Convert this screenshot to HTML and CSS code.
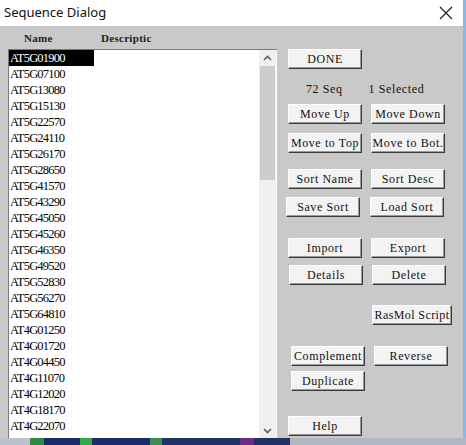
FILE: index.html
```html
<!DOCTYPE html>
<html>
<head>
<meta charset="utf-8">
<link rel="stylesheet" href="styles.css">
</head>
<body>
<div class="window">
  <div class="titlebar">
    <span class="title">Sequence Dialog</span>
    <svg class="close" width="14" height="14" viewBox="0 0 14 14"><path d="M1 1 L13 13 M13 1 L1 13" stroke="#222" stroke-width="1.2" fill="none"/></svg>
  </div>
  <div class="client">
    <div class="left">
      <div class="header">
        <span class="col-name">Name</span>
        <span class="col-desc">Descriptic</span>
      </div>
      <div class="listbox">
        <div class="items">
          <div class="item selected">AT5G01900</div>
          <div class="item">AT5G07100</div>
          <div class="item">AT5G13080</div>
          <div class="item">AT5G15130</div>
          <div class="item">AT5G22570</div>
          <div class="item">AT5G24110</div>
          <div class="item">AT5G26170</div>
          <div class="item">AT5G28650</div>
          <div class="item">AT5G41570</div>
          <div class="item">AT5G43290</div>
          <div class="item">AT5G45050</div>
          <div class="item">AT5G45260</div>
          <div class="item">AT5G46350</div>
          <div class="item">AT5G49520</div>
          <div class="item">AT5G52830</div>
          <div class="item">AT5G56270</div>
          <div class="item">AT5G64810</div>
          <div class="item">AT4G01250</div>
          <div class="item">AT4G01720</div>
          <div class="item">AT4G04450</div>
          <div class="item">AT4G11070</div>
          <div class="item">AT4G12020</div>
          <div class="item">AT4G18170</div>
          <div class="item">AT4G22070</div>
        </div>
        <div class="scrollbar">
          <svg class="arrow" width="17" height="14" viewBox="0 0 17 14"><polyline points="5,9 8.5,5.5 12,9" stroke="#606060" stroke-width="1.6" fill="none"/></svg>
          <div class="track"><div class="thumb"></div></div>
          <svg class="arrow" width="17" height="14" viewBox="0 0 17 14"><polyline points="5,5 8.5,8.5 12,5" stroke="#606060" stroke-width="1.6" fill="none"/></svg>
        </div>
      </div>
    </div>
    <div class="right">
      <div class="row r-done"><button class="btn">DONE</button></div>
      <div class="row r-count"><span class="count">72 Seq</span><span class="count sel">1 Selected</span></div>
      <div class="row r-move"><button class="btn">Move Up</button><button class="btn">Move Down</button></div>
      <div class="row r-moveto"><button class="btn">Move to Top</button><button class="btn">Move to Bot.</button></div>
      <div class="row r-sort"><button class="btn">Sort Name</button><button class="btn">Sort Desc</button></div>
      <div class="row r-save"><button class="btn">Save Sort</button><button class="btn">Load Sort</button></div>
      <div class="row r-import"><button class="btn">Import</button><button class="btn">Export</button></div>
      <div class="row r-details"><button class="btn">Details</button><button class="btn">Delete</button></div>
      <div class="row r-rasmol"><button class="btn wide">RasMol Script</button></div>
      <div class="row r-comp"><button class="btn">Complement</button><button class="btn">Reverse</button></div>
      <div class="row r-dup"><button class="btn">Duplicate</button></div>
      <div class="row r-help"><button class="btn">Help</button></div>
    </div>
  </div>
  <div class="strip"></div>
</div>
</body>
</html>
```

FILE: styles.css
```css
* { box-sizing: border-box; }
html, body { margin: 0; padding: 0; }
body {
  width: 466px;
  height: 445px;
  overflow: hidden;
  background: #8fb6e2;
}
.window {
  width: 463px;
  height: 445px;
  display: flex;
  flex-direction: column;
}
.titlebar {
  height: 26px;
  background: #ffffff;
  display: flex;
  align-items: center;
  justify-content: space-between;
  padding: 0 10px 0 4px;
}
.title {
  font-family: "Noto Sans", "Liberation Sans", sans-serif;
  font-size: 13px;
  color: #111;
  margin-top: -2px;
}
.close { margin-top: -1px; }
.client {
  height: 412px;
  background: #c9c9c9;
  display: flex;
  padding-left: 8px;
}
.left {
  width: 269px;
  display: flex;
  flex-direction: column;
}
.header {
  height: 23px;
  display: flex;
  align-items: center;
  font-family: "Liberation Serif", serif;
  font-weight: bold;
  font-size: 11px;
  letter-spacing: 0.3px;
  color: #222;
  padding-top: 1px;
}
.col-name { margin-left: 16px; width: 77px; }
.col-desc { width: 60px; overflow: hidden; white-space: nowrap; }
.listbox {
  flex: 1;
  background: #fff;
  border-top: 1px solid #7a7a7a;
  border-left: 1px solid #7a7a7a;
  display: flex;
  overflow: hidden;
}
.items {
  flex: 1;
  display: flex;
  flex-direction: column;
}
.item {
  height: 16px;
  line-height: 16px;
  font-family: "Liberation Serif", serif;
  font-size: 12.5px;
  letter-spacing: -0.8px;
  color: #000;
  padding-left: 1px;
  width: 85px;
}
.item.selected {
  background: #000;
  color: #fff;
}
.scrollbar {
  width: 17px;
  background: #f0f0f0;
  display: flex;
  flex-direction: column;
  margin-right: 1px;
}
.arrow { display: block; flex: none; margin-top: 1px; }
.track { flex: 1; padding: 1px 1px; }
.thumb {
  height: 114px;
  background: #cdcdcd;
}
.right {
  display: flex;
  flex-direction: column;
  margin-left: 11px;
  padding-top: 23px;
}
.row { display: flex; gap: 9px; }
.btn {
  width: 74px;
  height: 20px;
  margin: 0;
  padding: 0;
  background: #f3f3f3;
  border: 1px solid;
  border-color: #ffffff #3a3a3a #3a3a3a #ffffff;
  box-shadow: inset -1px -1px #9a9a9a;
  font-family: "Liberation Serif", serif;
  font-size: 12px;
  letter-spacing: 0.6px;
  color: #111;
  text-align: center;
  white-space: nowrap;
  overflow: hidden;
}
.btn.wide { width: 80px; letter-spacing: 0.4px; }
.count {
  font-family: "Liberation Serif", serif;
  font-size: 12px;
  letter-spacing: 0.6px;
  color: #111;
  height: 14px;
  line-height: 14px;
}
.r-count { margin-top: 13px; padding-left: 18px; gap: 26px; }
.r-move { margin-top: 8px; }
.r-moveto { margin-top: 9px; }
.r-sort { margin-top: 16px; }
.r-save { margin-top: 8px; margin-left: -2px; }
.r-save .btn + .btn { margin-left: 1px; }
.r-import { margin-top: 21px; }
.r-details { margin-top: 7px; margin-left: 1px; }
.r-rasmol { margin-top: 20px; padding-left: 84px; }
.r-comp { margin-top: 21px; margin-left: 3px; }
.r-dup { margin-top: 5px; margin-left: 3px; }
.r-help { margin-top: 25px; }
.strip {
  height: 7px;
  width: 466px;
  background: linear-gradient(90deg, #b9c3cf 0 30px, #2e8a3e 30px 44px, #1c2b6a 44px 80px, #35a849 80px 92px, #1c2b6a 92px 150px, #3c8e54 150px 162px, #22306a 162px 240px, #6c2c86 240px 254px, #22306a 254px 290px, #b0b8c4 290px 466px);
}
```
